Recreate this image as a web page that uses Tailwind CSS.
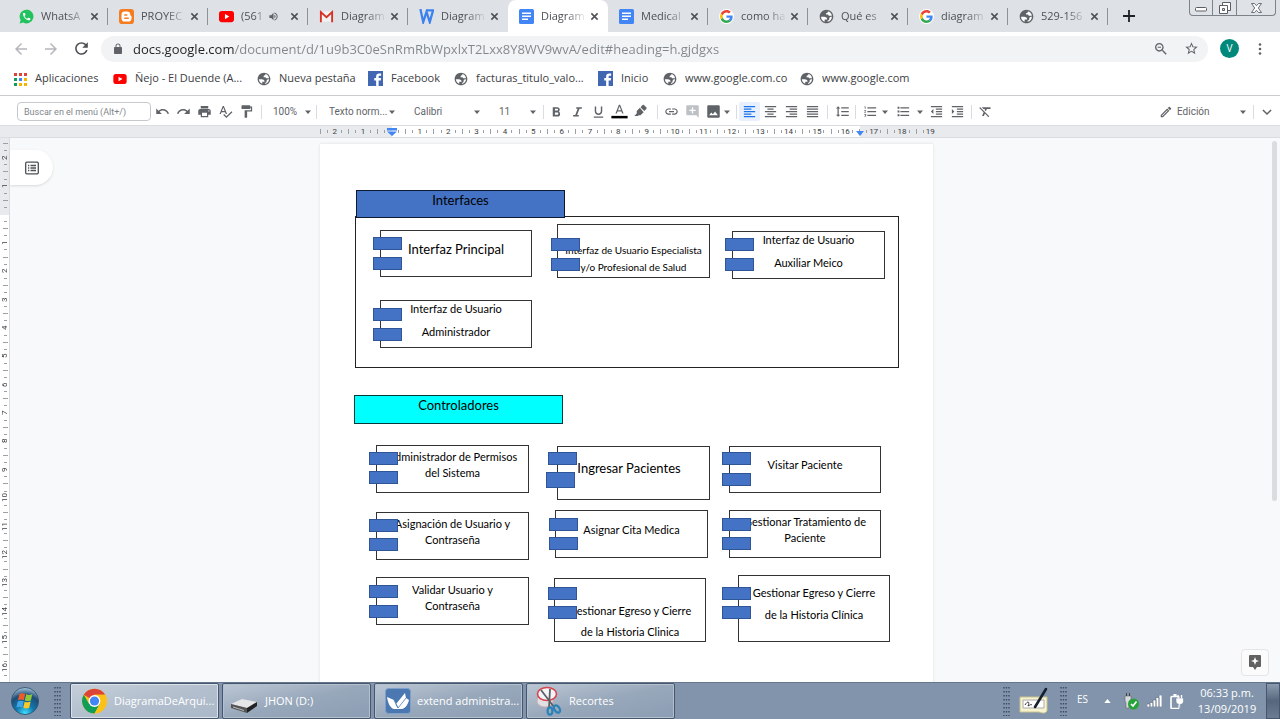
<!DOCTYPE html>
<html lang="es">
<head>
<meta charset="utf-8">
<title>DiagramaDeArquitectura - Documentos de Google</title>
<script src="https://cdn.jsdelivr.net/npm/@tailwindcss/browser@4"></script>
</head>
<body class="h-screen overflow-hidden flex flex-col bg-white font-['Open_Sans','Noto_Sans',sans-serif] text-[11px] text-[#3c4043]">

<svg class="hidden" aria-hidden="true">
  <symbol id="close" viewBox="0 0 10 10"><path d="M1.5 1.5l7 7M8.5 1.5l-7 7" stroke="#4d5156" stroke-width="1.7"/></symbol>
  <symbol id="caret" viewBox="0 0 8 8"><path d="M1 2.500h6L4 6z" fill="#5f6368"/></symbol>
  <symbol id="globe" viewBox="1 1 22 22"><circle cx="12" cy="12" r="9" fill="#fff"/><path fill="#5f6368" d="M12 2C6.480 2 2 6.480 2 12s4.480 10 10 10 10-4.480 10-10S17.520 2 12 2zM4 12.400h4.400c3 0 4.500 1.400 4.600 4.100h-3.700v3.100A8 8 0 0 1 4 12.400zm9.500 7.450V18c1.600 0 2.500-.900 2.500-2.500 0-2.200 1.500-3 3.900-3A8 8 0 0 1 13.500 19.850zM19.900 11h-4c-1 0-1.300-.8-1.300-1.800h-3.400c0-2.200 1-3.200 2.800-3.200V4.200a8 8 0 0 1 5.900 6.800z"/></symbol>
  <symbol id="youtube" viewBox="0 0 16 12"><rect x="0" y="0" width="16" height="12" rx="3" fill="#f00"/><path d="M6.300 3.200v5.600L11 6z" fill="#fff"/></symbol>
  <symbol id="facebook" viewBox="0 0 24 24"><path fill="#4267b2" d="M0 0h24v24H0z"/><path fill="#fff" d="M13 24v-9h-3v-4h3V8.500C13 5.500 15 4 17.800 4H21v3.600h-2c-1.600 0-2 .7-2 1.800V11h4l-.6 4H17v9z"/></symbol>
  <symbol id="google" viewBox="-4 -4 56 56"><circle cx="24" cy="24" r="28" fill="#fff"/><path fill="#EA4335" d="M24 9.500c3.540 0 6.710 1.220 9.210 3.600l6.850-6.850C35.900 2.380 30.470 0 24 0 14.620 0 6.510 5.380 2.560 13.220l7.980 6.190C12.430 13.720 17.740 9.500 24 9.500z"/><path fill="#4285F4" d="M46.980 24.550c0-1.570-.15-3.090-.38-4.550H24v9.020h12.940c-.58 2.960-2.260 5.480-4.780 7.180l7.730 6c4.510-4.180 7.090-10.360 7.090-17.650z"/><path fill="#FBBC05" d="M10.530 28.590c-.48-1.450-.76-2.990-.76-4.590s.27-3.140.76-4.590l-7.980-6.190C.92 16.460 0 20.120 0 24c0 3.880.92 7.540 2.560 10.780l7.970-6.190z"/><path fill="#34A853" d="M24 48c6.480 0 11.930-2.130 15.890-5.810l-7.730-6c-2.150 1.450-4.920 2.300-8.160 2.300-6.260 0-11.570-4.220-13.470-9.910l-7.980 6.190C6.510 42.620 14.620 48 24 48z"/></symbol>
  <symbol id="docs" viewBox="0 0 15 15"><rect width="15" height="15" rx="1.500" fill="#4285f4"/><path d="M3 4.300h9M3 7.300h9M3 10.300h6" stroke="#fff" stroke-width="1.400"/></symbol>
  <symbol id="whatsapp" viewBox="0 0 24 24"><path fill="#22c35e" d="M12 1a11 11 0 0 0-9.400 16.600L1 23l5.600-1.500A11 11 0 1 0 12 1z"/><path fill="#fff" transform="translate(4.500 4.500) scale(.64)" d="M6.620 10.790c1.440 2.830 3.760 5.140 6.590 6.590l2.200-2.200c.27-.27.67-.36 1.020-.24 1.120.37 2.330.57 3.570.57.55 0 1 .45 1 1V20c0 .55-.45 1-1 1-9.390 0-17-7.610-17-17 0-.55.45-1 1-1h3.500c.55 0 1 .45 1 1 0 1.250.2 2.450.57 3.570.11.35.03.74-.25 1.020l-2.200 2.200z"/></symbol>
  <symbol id="blogger" viewBox="0 0 24 24"><rect width="24" height="24" rx="5" fill="#f57d20"/><path fill="#fff" fill-rule="evenodd" d="M9 4h4c3 0 5 2 5 4.500v1c0 .8.500 1.200 1.200 1.200.5 0 .8.400.8.800V15c0 3-2 5-5 5H9c-3 0-5-2-5-5V9c0-3 2-5 5-5zm.2 4.200a1.200 1.200 0 0 0 0 2.400h3.300a1.200 1.200 0 0 0 0-2.400zm0 5.200a1.200 1.200 0 0 0 0 2.400h5.600a1.200 1.200 0 0 0 0-2.400z"/></symbol>
  <symbol id="gmail" viewBox="0 0 24 24"><path fill="#f2f2f2" d="M3 4h18v16H3z"/><path fill="none" stroke="#d93025" stroke-width="3" d="M3 21V5l9 8 9-8v16"/></symbol>
  <symbol id="word" viewBox="0 0 16 16"><path d="M1.500 0l3 14L8 3l3.500 11L15 1.500H8" fill="none" stroke="#3b82f0" stroke-width="2.400"/></symbol>
</svg>

<!-- Tab strip -->
<header class="h-8 shrink-0 flex bg-[#dee1e6] pl-2">
  <nav class="flex" aria-label="Pestañas" id="tabs"></nav>
  <button class="w-[42px] flex items-center justify-center" aria-label="Nueva pestaña"><svg class="size-3" viewBox="0 0 12 12"><path d="M6 0v12M0 6h12" stroke="#202124" stroke-width="1.800"/></svg></button>
  <div class="ml-auto mr-1 self-start h-4 flex border border-t-0 border-[#7d8288] rounded-b bg-[#dfe2e7] divide-x divide-[#7d8288]">
    <button class="w-[23px] flex items-center justify-center" aria-label="Minimizar"><svg class="w-3 h-3" viewBox="0 0 12 12"><rect x=".5" y="5.500" width="11" height="3.500" rx="1" fill="#fff" stroke="#5a5f66"/></svg></button>
    <button class="w-6 flex items-center justify-center" aria-label="Restaurar"><svg class="size-3" viewBox="0 0 12 12"><path d="M3.500.5h8v8h-8z" fill="#fff" stroke="#5a5f66"/><path d="M.5 3.500h8v8h-8z" fill="#fff" stroke="#5a5f66"/><path d="M3.500 6.500h2v2h-2z" fill="#dfe2e7" stroke="#5a5f66"/></svg></button>
    <button class="w-[38px] flex items-center justify-center" aria-label="Cerrar"><svg class="w-[11px] h-[10px]" viewBox="0 0 12 11"><path d="M.5.500h3.200L6 3 8.300.5h3.200L8 5.500l3.500 5H8.300L6 8l-2.300 2.500H.5l3.500-5z" fill="#fff" stroke="#5a5f66"/></svg></button>
  </div>
</header>

<!-- Address bar -->
<div class="h-8 shrink-0 flex items-center pt-px pl-[6px] pr-3 text-[#5f6368]">
  <button class="w-[30px] flex justify-center text-[#b4b7bb]" aria-label="Atrás"><svg class="size-[18px]" viewBox="0 0 24 24" fill="currentColor"><path d="M20 11H7.830l5.590-5.590L12 4l-8 8 8 8 1.410-1.410L7.830 13H20v-2z"/></svg></button>
  <button class="w-[30px] flex justify-center text-[#b4b7bb]" aria-label="Adelante"><svg class="size-[18px]" viewBox="0 0 24 24" fill="currentColor"><path d="M12 4l-1.410 1.410L16.170 11H4v2h12.170l-5.580 5.590L12 20l8-8z"/></svg></button>
  <button class="w-[30px] flex justify-center text-[#4d5156]" aria-label="Recargar"><svg class="size-[19px]" viewBox="0 0 24 24" fill="currentColor"><path d="M17.650 6.350C16.200 4.900 14.210 4 12 4c-4.420 0-7.990 3.580-7.990 8s3.570 8 7.990 8c3.730 0 6.840-2.550 7.730-6h-2.080c-.82 2.330-3.040 4-5.650 4-3.310 0-6-2.690-6-6s2.690-6 6-6c1.660 0 3.140.69 4.220 1.780L13 11h7V4l-2.350 2.350z"/></svg></button>
  <label class="ml-[5px] h-[26px] flex-1 flex items-center rounded-full bg-[#f1f3f4] pl-[11px] pr-[9px]">
    <svg class="size-3" viewBox="0 0 24 24" fill="#5f6368"><path d="M18 8h-1V6c0-2.760-2.240-5-5-5S7 3.240 7 6v2H6c-1.100 0-2 .9-2 2v10c0 1.100.9 2 2 2h12c1.100 0 2-.9 2-2V10c0-1.100-.9-2-2-2zm-2.900 0H8.900V6c0-1.710 1.390-3.100 3.100-3.100s3.100 1.390 3.100 3.100v2z"/></svg>
    <input type="text" aria-label="Dirección" class="ml-[9px] flex-1 h-5 text-[13px] outline-none text-transparent bg-clip-text bg-[linear-gradient(90deg,#202124_101px,#80868b_101px)]" value="docs.google.com/document/d/1u9b3C0eSnRmRbWpxlxT2Lxx8Y8WV9wvA/edit#heading=h.gjdgxs">
    <button class="w-[30px] flex justify-center" aria-label="Zoom"><svg class="size-4" viewBox="0 0 24 24" fill="#5f6368"><path d="M15.500 14h-.79l-.28-.27C15.410 12.590 16 11.110 16 9.500 16 5.910 13.090 3 9.500 3S3 5.910 3 9.500 5.910 16 9.500 16c1.610 0 3.090-.59 4.230-1.570l.27.28v.79l5 4.990L20.490 19l-4.990-5zm-6 0C7.010 14 5 11.990 5 9.500S7.010 5 9.500 5 14 7.010 14 9.500 11.990 14 9.500 14zM7 8.700h5v1.600H7z"/></svg></button>
    <button class="w-[30px] -mr-[7px] flex justify-center" aria-label="Añadir a marcadores"><svg class="size-[15px]" viewBox="0 0 24 24" fill="#5f6368"><path d="M22 9.240l-7.190-.62L12 2 9.190 8.630 2 9.240l5.460 4.730L5.820 21 12 17.270 18.180 21l-1.630-7.030L22 9.240zM12 15.400l-3.760 2.270 1-4.280-3.320-2.880 4.380-.38L12 6.100l1.710 4.040 4.380.38-3.320 2.880 1 4.280L12 15.400z"/></svg></button>
  </label>
  <button class="ml-3 size-[19px] rounded-full bg-[#00897b] text-white text-[10px] leading-[19px]" aria-label="Perfil V">V</button>
  <button class="ml-[13px] w-4 flex justify-center" aria-label="Menú"><svg class="w-1 h-3" viewBox="0 0 4 12" fill="#5f6368"><circle cx="2" cy="1.500" r="1.300"/><circle cx="2" cy="6" r="1.300"/><circle cx="2" cy="10.500" r="1.300"/></svg></button>
</div>

<!-- Bookmarks -->
<nav class="h-8 shrink-0 flex items-center pl-[13px] pb-[2px] border-b border-[#c9cbce]" aria-label="Marcadores">
  <a href="#" class="w-[100px] flex items-center gap-2"><svg class="w-[14px] h-[14px]" viewBox="0 0 14 14"><path fill="#db4437" d="M1 1h3v3H1zM6 1h3v3H6zM11 1h3v3h-3z"/><path fill="#0f9d58" d="M1 6h3v3H1zM1 11h3v3H1z"/><path fill="#4285f4" d="M6 6h3v3H6z"/><path fill="#f4b400" d="M11 6h3v3h-3zM6 11h3v3H6zM11 11h3v3h-3z"/></svg>Aplicaciones</a>
  <a href="#" class="w-36 flex items-center gap-2"><svg class="w-[14px] h-[10px]"><use href="#youtube"/></svg>Ñejo - El Duende (A...</a>
  <a href="#" class="w-[111px] flex items-center gap-2"><svg class="size-[14px]"><use href="#globe"/></svg>Nueva pestaña</a>
  <a href="#" class="w-[86px] flex items-center gap-2"><svg class="size-[15px]"><use href="#facebook"/></svg>Facebook</a>
  <a href="#" class="w-36 flex items-center gap-2"><svg class="size-[14px]"><use href="#globe"/></svg>facturas_titulo_valo...</a>
  <a href="#" class="w-[65px] flex items-center gap-2"><svg class="size-[15px]"><use href="#facebook"/></svg>Inicio</a>
  <a href="#" class="w-[137px] flex items-center gap-2"><svg class="size-[14px]"><use href="#globe"/></svg>www.google.com.co</a>
  <a href="#" class="flex items-center gap-2"><svg class="size-[14px]"><use href="#globe"/></svg>www.google.com</a>
</nav>

<!-- Document toolbar -->
<div class="h-[30px] shrink-0 flex items-center pt-[2px] pl-[17px] pr-[6px] border-b border-[#dadce0] font-[Roboto,'Liberation_Sans',sans-serif] text-[10px] text-[#5f6368]" role="toolbar" aria-label="Formato">
  <input type="text" placeholder="Buscar en el menú (Alt+/)" aria-label="Buscar en el menú" class="w-[134px] h-[19px] border border-[#c6c9cd] rounded-sm px-[6px] outline-none text-[9px] placeholder:text-[#80868b]">
  <div class="ml-px flex" id="tools-edit"></div>
  <span class="ml-1 w-px h-[14px] bg-[#dadce0]"></span>
  <label class="ml-[11px] w-[39px] flex items-center justify-between"><select aria-label="Zoom" class="appearance-none w-7 outline-none"><option>100%</option></select><svg class="size-2"><use href="#caret"/></svg></label>
  <span class="ml-1 w-px h-[14px] bg-[#dadce0]"></span>
  <label class="ml-3 w-[67px] flex items-center justify-between"><select aria-label="Estilos" class="appearance-none w-[59px] outline-none"><option>Texto norm...</option></select><svg class="size-2 shrink-0"><use href="#caret"/></svg></label>
  <label class="ml-[18px] w-[67px] flex items-center justify-between"><select aria-label="Fuente" class="appearance-none w-12 outline-none"><option>Calibri</option></select><svg class="size-2"><use href="#caret"/></svg></label>
  <label class="ml-[18px] w-[38px] flex items-center justify-between"><select aria-label="Tamaño de fuente" class="appearance-none w-5 outline-none"><option>11</option></select><svg class="size-2"><use href="#caret"/></svg></label>
  <span class="ml-[6px] mr-[2px] w-px h-[14px] bg-[#dadce0]"></span>
  <div class="flex" id="tools-text"></div>
  <span class="ml-[6px] mr-[3px] w-px h-[14px] bg-[#dadce0]"></span>
  <div class="flex" id="tools-insert"></div>
  <svg class="-ml-px size-2"><use href="#caret"/></svg>
  <span class="ml-[5px] mr-[2px] w-px h-[14px] bg-[#dadce0]"></span>
  <div class="flex" id="tools-align"></div>
  <span class="mx-1 w-px h-[14px] bg-[#dadce0]"></span>
  <div class="flex" id="tools-spacing"></div>
  <span class="ml-[2px] mr-1 w-px h-[14px] bg-[#dadce0]"></span>
  <div class="flex" id="tools-numbered"></div>
  <svg class="mr-1 size-2"><use href="#caret"/></svg>
  <div class="flex" id="tools-bulleted"></div>
  <svg class="mx-[2px] size-2"><use href="#caret"/></svg>
  <div class="flex" id="tools-indent"></div>
  <span class="mx-[3px] w-px h-[14px] bg-[#dadce0]"></span>
  <div class="flex" id="tools-clear"></div>
  <label class="ml-auto w-[88px] flex items-center"><svg class="size-[14px]" viewBox="0 0 24 24" fill="#5f6368"><path d="M14.060 9.020l.92.92L5.920 19H5v-.92l9.060-9.060M17.660 3c-.25 0-.51.1-.7.29l-1.830 1.830 3.750 3.750 1.830-1.830c.39-.39.39-1.020 0-1.410l-2.340-2.340c-.2-.2-.45-.29-.71-.29zm-3.600 3.190L3 17.250V21h3.750L17.810 9.940l-3.750-3.750z"/></svg><select aria-label="Modo" class="ml-1 flex-1 appearance-none outline-none"><option>Edición</option></select><svg class="size-2"><use href="#caret"/></svg></label>
  <span class="mx-[6px] w-px h-[14px] bg-[#dadce0]"></span>
  <button class="w-[14px]" aria-label="Ocultar menús"><svg class="size-[14px]" viewBox="0 0 24 24"><path d="M5 8.500l7 7 7-7" fill="none" stroke="#5f6368" stroke-width="2.600"/></svg></button>
</div>

<!-- Horizontal ruler -->
<div class="h-[12px] shrink-0 flex justify-center pl-[10px] pr-[37px] bg-[#e8eaed] border-b border-[#dadce0] font-[Roboto,'Liberation_Sans',sans-serif] text-[8px] text-[#3c4043]">
  <div class="relative w-[613px]">
    <div class="absolute inset-y-0 left-[72px] w-[468px] bg-white"></div>
    <div class="absolute inset-y-0 -left-[3px] w-[624px] grid grid-cols-22" id="hruler"></div>
    <svg class="absolute left-[67px] top-[2px] w-[10px] h-2" viewBox="0 0 10 8" fill="#4285f4"><path d="M0 0h10v2.500H0zM0 3.500h10L5 8z"/></svg>
    <svg class="absolute left-[536px] top-[5px] w-2 h-[5px]" viewBox="0 0 8 5" fill="#4285f4"><path d="M0 0h8L4 5z"/></svg>
  </div>
</div>

<!-- Workspace -->
<main class="relative flex-1 min-h-0 flex bg-[#f8f9fa] overflow-hidden">
  <div class="relative w-[10px] shrink-0 pt-[2px] bg-white border-r border-[#dadce0] font-[Roboto,'Liberation_Sans',sans-serif] text-[8px] text-[#3c4043]">
    <div class="absolute inset-x-0 top-0 h-[77px] bg-[#e8eaed]"></div>
    <div class="relative h-[539px] grid grid-rows-19" id="vruler"></div>
  </div>
  <div class="flex-1 flex justify-center pt-[5px] pr-[37px]">
    <article class="relative w-[613px] bg-white border-t border-[#eceef0] shadow font-[Lato,'Liberation_Sans',sans-serif] text-black" id="page"></article>
  </div>
  <button class="absolute left-[10px] top-3 w-[43px] h-[35px] pl-[15px] rounded-r-full bg-white shadow" aria-label="Mostrar esquema"><svg class="size-[14px]" viewBox="0 0 14 14"><rect x=".7" y="1.200" width="12.600" height="11.600" rx="1" fill="none" stroke="#4d5156" stroke-width="1.300"/><path d="M3 4.500h1.300M3 7h1.300M3 9.500h1.300M5.500 4.500H11M5.500 7H11M5.500 9.500H11" stroke="#4d5156" stroke-width="1.300"/></svg></button>
  <div class="absolute right-[3px] top-[3px] w-[5px] h-[360px] rounded-full bg-[#dadce0]"></div>
  <button class="absolute right-[11px] bottom-[6px] w-[28px] h-[27px] flex items-center justify-center rounded-sm border border-[#e3e5e8] bg-[#fbfbfc]" aria-label="Explorar"><svg class="w-3 h-[15px]" viewBox="0 0 12 15"><path fill="#616161" d="M1 0h10a1 1 0 0 1 1 1v10a1 1 0 0 1-1 1H8l-2 3-2-3H1a1 1 0 0 1-1-1V1a1 1 0 0 1 1-1z"/><path fill="#fff" d="M6 2l1.100 2.900L10 6 7.100 7.100 6 10 4.900 7.100 2 6l2.900-1.100z"/></svg></button>
</main>

<!-- Taskbar -->
<footer class="h-[37px] shrink-0 flex items-center bg-[#8294ab] border-t border-[#66768c] text-white">
  <button class="ml-[11px] size-[28px] shrink-0" aria-label="Inicio"><svg class="size-[28px]" viewBox="0 0 32 32">
    <defs><radialGradient id="orb" cx=".5" cy=".95" r=".95"><stop offset="0" stop-color="#3fe0ff"/><stop offset=".35" stop-color="#1277ad"/><stop offset=".7" stop-color="#1f4c75"/><stop offset="1" stop-color="#a9c8de"/></radialGradient></defs>
    <circle cx="16" cy="16" r="15.500" fill="url(#orb)" stroke="#34536f"/>
    <path fill="#f0592a" d="M9.500 8c2.200-1.200 4.500-1.200 6.700-.2l-1.500 7.200c-2.200-1-4.500-.9-6.700.2z"/><path fill="#8fc93a" d="M17.300 8.300c2.200 1 4.500 1 7-.1l-1.600 7.100c-2.300 1-4.500 1-6.900.1z"/><path fill="#42a5e8" d="M7.700 16.500c2.200-1.100 4.500-1.200 6.700-.2L12.900 23.300c-2.200-1-4.500-.9-6.700.2z"/><path fill="#fbc926" d="M15.500 16.800c2.300.9 4.500.9 6.900-.1l-1.600 7c-2.200 1-4.400 1-6.700.1z"/></svg></button>
  <svg class="ml-[15px] w-[7px] h-[30px] shrink-0"><use href="#grip"/></svg>
  <nav class="ml-[9px] flex gap-1" aria-label="Ventanas abiertas">
    <button class="w-[149px] -mr-px h-9 flex items-center pl-[10px] gap-[6px] rounded-xs border border-[#46566c] bg-linear-to-br from-[#c5cfda] via-[#b3bfcd] to-[#aab8c9] inset-shadow-[0_0_0_1px_#dbe2ea]">
      <svg class="w-[27px] h-[28px]" viewBox="0 0 48 48"><circle cx="24" cy="24" r="22" fill="#fbc116"/><path fill="#db4437" d="M24 24L4.900 13A22 22 0 0 1 43 13H24z"/><path fill="#0f9d58" d="M4.900 13A22 22 0 0 0 24 46l9.500-16.500L24 24l-9.500 5.500z"/><path fill="#fbc116" d="M33.500 29.500L24 46A22 22 0 0 0 43.100 13H24z"/><circle cx="24" cy="24" r="10.500" fill="#fff"/><circle cx="24" cy="24" r="8.200" fill="#4285f4"/></svg>
      <span>DiagramaDeArqui...</span></button>
    <button class="w-[149px] -mr-px h-9 flex items-center pl-[7px] gap-[6px] rounded-xs border border-[#46566c] bg-linear-to-br from-[#bcc7d4] via-[#98a8bb] to-[#8b9db3] inset-shadow-[0_0_0_1px_#b4c0ce]">
      <svg class="w-[29px] h-[28px]" viewBox="0 0 29 28"><path fill="#e6e6e6" d="M1 17l11-5 15 3-10 6z"/><path fill="#555" d="M1 17l16 4v5L1 21z"/><path fill="#222" d="M17 21l10-6v4l-10 7z"/><path stroke="#bbb" d="M3 20l11 3.500"/></svg>
      <span>JHON (D:)</span></button>
    <button class="w-[149px] -mr-px h-9 flex items-center pl-[10px] gap-[6px] rounded-xs border border-[#46566c] bg-linear-to-br from-[#bcc7d4] via-[#98a8bb] to-[#8b9db3] inset-shadow-[0_0_0_1px_#b4c0ce]">
      <svg class="w-[26px] h-[28px]" viewBox="0 0 26 28"><rect x=".5" y="1.500" width="25" height="25" rx="3" fill="#4b78b0" stroke="#7fa0c8"/><path fill="#fff" d="M2 10l7 3 2 4 9-11 1 5 3 2c-1 4-3 8-7 9H9c-4-1-6-6-7-12z"/><path stroke="#4b78b0" stroke-width=".8" d="M11 17l2 4 8-10M9 13l4 8" fill="none"/></svg>
      <span>extend administra...</span></button>
    <button class="w-[149px] h-9 flex items-center pl-2 gap-[6px] rounded-xs border border-[#46566c] bg-linear-to-br from-[#bcc7d4] via-[#98a8bb] to-[#8b9db3] inset-shadow-[0_0_0_1px_#b4c0ce]">
      <svg class="w-[28px] h-[30px]" viewBox="0 0 28 30"><ellipse cx="10" cy="15" rx="8" ry="6" fill="#dfe0e4" stroke="#d9aeb2"/><ellipse cx="12" cy="8" rx="9.500" ry="6.500" fill="#f4f4f6" stroke="#d8434c" stroke-width="1.600"/><path d="M6 4l13 17M15 3l-1 19" stroke="#5c6068" stroke-width="1.800"/><ellipse cx="22" cy="23" rx="2.600" ry="4" transform="rotate(-35 22 23)" fill="none" stroke="#2a82b8" stroke-width="2.200"/><ellipse cx="15" cy="25" rx="2.400" ry="3.600" fill="none" stroke="#2a82b8" stroke-width="2.200"/></svg>
      <span>Recortes</span></button>
  </nav>
  <div class="ml-auto flex items-center h-full">
    <svg class="w-[7px] h-[30px]"><use href="#grip"/></svg>
    <svg class="ml-[9px] w-[30px] h-[28px]" viewBox="0 0 30 28"><path fill="#f7f3cf" stroke="#c9c48f" d="M1 10h27v14c-2 3-5 2-8 1H1z"/><path fill="#fff" stroke="#aaa" d="M4 13h21v8H4z"/><path d="M6 18c3-5 5-3 3 1 2-1 3-2 4-1" stroke="#333" fill="none"/><path d="M27 2L16 20" stroke="#16202e" stroke-width="2.600" stroke-linecap="round"/></svg>
    <svg class="ml-[11px] w-[7px] h-[30px]"><use href="#grip"/></svg>
    <span class="ml-[10px] pb-1 text-[10px]">ES</span>
    <svg class="ml-4 w-[7px] h-1" viewBox="0 0 8 5"><path d="M0 5h8L4 0z" fill="#fff"/></svg>
    <svg class="ml-3 w-4 h-5" viewBox="0 0 16 20"><path fill="#d7dade" stroke="#666" stroke-width=".6" d="M2 5h6v5l-2 2v5H3v-5L2 10z"/><path d="M3.500 5V2M6.500 5V2" stroke="#444"/><circle cx="10.500" cy="13" r="5.500" fill="#27a33a"/><path d="M8 13l2 2 3.500-4.500" stroke="#fff" stroke-width="1.600" fill="none"/></svg>
    <svg class="ml-2 w-[15px] h-3" viewBox="0 0 15 12" fill="#fff" stroke="#5b6b80" stroke-width=".6"><path d="M0 9h3v3H0zM3 7.500h3V12H3zM6 5h3v7H6zM9 2.500h3V12H9zM12 0h3v12h-3z"/></svg>
    <svg class="ml-2 w-[14px] h-[15px]" viewBox="0 0 14 15"><rect x="1" y="2.500" width="8" height="12" rx="1" fill="none" stroke="#fff" stroke-width="1.600"/><path d="M3.500 1h3" stroke="#fff" stroke-width="2"/><path fill="#fff" stroke="#6b7b90" stroke-width=".5" d="M6 4h7.500v3c0 2-1 3-3 3.300V14H9v-3.700C7 10 6 9 6 7z"/><path d="M8 1v3M11.500 1v3" stroke="#fff" stroke-width="1.300"/></svg>
    <div class="w-[62px] ml-3 text-center leading-4 whitespace-nowrap"><div>06:33 p.m.</div><div>13/09/2019</div></div>
    <div class="ml-2 w-[14px] h-full border border-[#46566c] bg-linear-to-b from-[#8c9bae] via-[#56677d] to-[#6c7c92]"></div>
  </div>
</footer>

<svg class="hidden" aria-hidden="true"><symbol id="grip" viewBox="0 0 7 30"><path d="M1 1v29M3.500 1v29M6 1v29" stroke="#3d4b5e" stroke-width="1.400" stroke-dasharray="1.500 2.500"/></symbol></svg>

<script>
const put = (id, html) => { document.getElementById(id).innerHTML = html; };

/* Browser tabs: icon, title, state */
const tabs = [
  ['whatsapp', 'WhatsA'], ['blogger', 'PROYEC'], ['youtube', '(561', 'sound'], ['gmail', 'Diagram'],
  ['word', 'Diagram'], ['docs', 'Diagram', 'active'], ['docs', 'Medical'], ['google', 'como ha'],
  ['globe', 'Qué es'], ['google', 'diagram'], ['globe', '529-156']
];
put('tabs', tabs.map(([icon, title, state], i) => `
  <div class="relative w-[100px] h-full flex items-center pl-[11px] pr-[9px] ${state === 'active' ? 'bg-white rounded-t-lg' : ''}">
    <svg class="size-[15px] shrink-0"><use href="#${icon}"/></svg>
    <a href="#" class="${state === 'sound' ? 'w-[25px]' : 'w-[46px]'} shrink-0 ml-[7px] whitespace-nowrap text-[#4d5156] [mask-image:linear-gradient(90deg,#000_55%,transparent)]">${title}</a>
    ${state === 'sound' ? '<svg class="ml-[2px] size-[11px] shrink-0" viewBox="0 0 24 24" fill="#5f6368"><path d="M3 9v6h4l5 5V4L7 9H3zm13.500 3c0-1.770-1.020-3.290-2.500-4.030v8.050c1.480-.73 2.500-2.250 2.500-4.020zM14 3.230v2.060c2.890.86 5 3.540 5 6.710s-2.110 5.850-5 6.710v2.060c4.010-.91 7-4.490 7-8.770s-2.990-7.860-7-8.770z"/></svg>' : ''}
    <button class="ml-auto" aria-label="Cerrar pestaña"><svg class="size-[9px]"><use href="#close"/></svg></button>
    ${state !== 'active' && i !== 4 ? '<span class="absolute right-0 top-2 w-px h-[17px] bg-[#8d9196]"></span>' : ''}
  </div>`).join(''));

/* Toolbar buttons */
const tool = (name, path, cls = '') => `<button class="w-[21px] h-[19px] flex items-center justify-center ${cls}" aria-label="${name}"><svg class="size-[15px]" viewBox="0 0 24 24" fill="currentColor">${path.startsWith('<') ? path : `<path d="${path}"/>`}</svg></button>`;
put('tools-edit',
  tool('Deshacer', 'M12.500 8c-2.650 0-5.050.99-6.900 2.600L2 7v9h9l-3.620-3.620c1.390-1.160 3.160-1.880 5.120-1.880 3.540 0 6.550 2.310 7.600 5.500l2.370-.78C21.080 11.030 17.150 8 12.500 8z') +
  tool('Rehacer', 'M18.400 10.600C16.550 8.990 14.150 8 11.500 8c-4.650 0-8.580 3.030-9.960 7.220L3.900 16c1.050-3.190 4.050-5.500 7.600-5.500 1.950 0 3.730.72 5.120 1.880L13 16h9V7l-3.600 3.600z') +
  tool('Imprimir', 'M19 8H5c-1.660 0-3 1.340-3 3v6h4v4h12v-4h4v-6c0-1.660-1.340-3-3-3zm-3 11H8v-5h8v5zm3-7c-.55 0-1-.45-1-1s.45-1 1-1 1 .45 1 1-.45 1-1 1zm-1-9H6v4h12V3z') +
  tool('Ortografía', 'M12.450 16h2.090L9.430 3H7.570L2.460 16h2.090l1.120-3h5.640l1.140 3zm-6.020-5L8.500 5.480 10.570 11H6.430zm15.160.59l-8.090 8.090L9.830 16l-1.410 1.410 5.090 5.090L23 13l-1.410-1.410z') +
  tool('Copiar formato', 'M18 4V3c0-.55-.45-1-1-1H5c-.55 0-1 .45-1 1v4c0 .55.45 1 1 1h12c.55 0 1-.45 1-1V6h1v4H9v11c0 .55.45 1 1 1h2c.55 0 1-.45 1-1v-9h8V4h-3z'));
put('tools-text',
  tool('Negrita', 'M15.600 11.790c.97-.67 1.650-1.770 1.650-2.790 0-2.260-1.750-4-4-4H6v15h8.040c2.090 0 3.710-1.700 3.710-3.790 0-1.520-.86-3.820-2.150-4.420zM9.500 7.500H13c.83 0 1.500.67 1.500 1.500s-.67 1.500-1.500 1.500H9.500v-3zm4 9.500h-4v-3.500h4c.83 0 1.500.67 1.500 1.500s-.67 2-1.500 2z') +
  tool('Cursiva', 'M10 5v2.500h2.210l-3.820 10H5V20h9v-2.500h-2.610l3.820-10H19V5z') +
  tool('Subrayado', 'M12 17.500c3.310 0 6-2.690 6-6V4h-2.300v7.500c0 1.930-1.770 3.700-3.700 3.700s-3.700-1.770-3.700-3.700V4H6v7.500c0 3.310 2.690 6 6 6zM4.500 20v2h15v-2h-15z') +
  tool('Color del texto', '<path d="M11 1L5.500 15h2.250l1.120-3h6.250l1.120 3h2.250L13 1h-2zm-1.380 9L12 3.670 14.380 10H9.620z"/><path fill="#000" d="M-1 19h26v4H-1z"/>', '[&>svg]:overflow-visible') +
  tool('Color de resaltado', 'M21.500 5.500l-4-4c-.6-.6-1.500-.6-2.100 0L12 5l6 6 3.500-3.400c.6-.6.6-1.500 0-2.100zM11 6L6 11v4l-4 4h6l1-1h3l5-5z'));
put('tools-insert',
  tool('Insertar enlace', 'M3.900 12c0-1.710 1.390-3.100 3.100-3.100h4V7H7c-2.760 0-5 2.240-5 5s2.240 5 5 5h4v-1.900H7c-1.710 0-3.100-1.390-3.100-3.100zM8 13h8v-2H8v2zm9-6h-4v1.900h4c1.710 0 3.100 1.390 3.100 3.100s-1.390 3.100-3.100 3.100h-4V17h4c2.760 0 5-2.240 5-5s-2.240-5-5-5z') +
  tool('Añadir comentario', 'M21.990 4c0-1.100-.89-2-1.990-2H4c-1.100 0-2 .9-2 2v12c0 1.100.9 2 2 2h14l4 4-.01-18zM17 11h-4v4h-2v-4H7V9h4V5h2v4h4v2z', 'text-[#bdc1c6]') +
  tool('Insertar imagen', 'M22 20V4c0-1.100-.9-2-2-2H4c-1.100 0-2 .9-2 2v16c0 1.100.9 2 2 2h16c1.100 0 2-.9 2-2zM8.500 13.500l2.500 3.010L14.500 12l4.500 6H5l3.500-4.500z'));
put('tools-align',
  tool('Alinear a la izquierda', 'M15 15H3v2h12v-2zm0-8H3v2h12V7zM3 13h18v-2H3v2zm0 8h18v-2H3v2zM3 3v2h18V3H3z', 'bg-[#e8f0fe] text-[#1a73e8] rounded-xs') +
  tool('Centrar', 'M7 15v2h10v-2H7zm-4 6h18v-2H3v2zm0-8h18v-2H3v2zm4-6v2h10V7H7zM3 3v2h18V3H3z') +
  tool('Alinear a la derecha', 'M3 21h18v-2H3v2zm6-4h12v-2H9v2zm-6-4h18v-2H3v2zm6-4h12V7H9v2zM3 3v2h18V3H3z') +
  tool('Justificar', 'M3 21h18v-2H3v2zm0-4h18v-2H3v2zm0-4h18v-2H3v2zm0-4h18V7H3v2zm0-6v2h18V3H3z'));
put('tools-spacing', tool('Interlineado', 'M6 7h2.500L5 3.500 1.500 7H4v10H1.500L5 20.500 8.500 17H6V7zm4-2v2h12V5H10zm0 14h12v-2H10v2zm0-6h12v-2H10v2z'));
put('tools-numbered', tool('Lista numerada', 'M2 17h2v.5H3v1h1v.5H2v1h3v-4H2v1zm1-9h1V4H2v1h1v3zm-1 3h1.800L2 13.100v.9h3v-1H3.200L5 10.900V10H2v1zm5-6v2h14V5H7zm0 14h14v-2H7v2zm0-6h14v-2H7v2z'));
put('tools-bulleted', tool('Lista con viñetas', 'M2.500 4.500h3v3h-3zM2.500 10.500h3v3h-3zM2.500 16.500h3v3h-3zM7 19h14v-2H7v2zm0-6h14v-2H7v2zm0-8v2h14V5H7z'));
put('tools-indent',
  tool('Reducir sangría', 'M11 17h10v-2H11v2zm-8-5l4 4V8l-4 4zm0 9h18v-2H3v2zM3 3v2h18V3H3zm8 6h10V7H11v2zm0 4h10v-2H11v2z') +
  tool('Aumentar sangría', 'M3 21h18v-2H3v2zM3 8v8l4-4-4-4zm8 9h10v-2H11v2zM3 3v2h18V3H3zm8 6h10V7H11v2zm0 4h10v-2H11v2z'));
put('tools-clear', tool('Borrar formato', 'M3.270 5L2 6.270l6.970 6.970L6.500 19h3l1.570-3.660L16.730 21 18 19.730 3.550 5.270 3.270 5zM6 5v.18L8.820 8h2.400l-.72 1.680 2.100 2.100L14.210 8H20V5H6z'));

/* Rulers: one cell per centimetre */
const cm = (from, to) => Array.from({ length: to - from + 1 }, (_, i) => Math.abs(from + i) || '');
put('hruler', cm(-2, 19).map(n => `<div class="grid grid-cols-4 items-center justify-items-center"><i class="w-px h-[5px] bg-[#9aa0a6]"></i><i class="w-px h-[3px] bg-[#9aa0a6]"></i><span class="w-0 flex justify-center leading-[10px]">${n}</span>${n === 19 ? '' : '<i class="w-px h-[3px] bg-[#9aa0a6]"></i>'}</div>`).join(''));
put('vruler', cm(-2, 16).map(n => `<div class="grid grid-rows-4 items-center justify-items-center"><i class="h-px w-[5px] bg-[#9aa0a6]"></i><i class="h-px w-[3px] bg-[#9aa0a6]"></i><span class="h-0 flex items-center justify-center leading-[10px] [writing-mode:vertical-rl] rotate-180">${n}</span><i class="h-px w-[3px] bg-[#9aa0a6]"></i></div>`).join(''));

/* Component diagram. Node: x, y, width, height, lugs [x, y, height], first line top, line height, text size, lines, text width */
const size = { s: 'text-[10px]', m: 'text-[11px]', l: 'text-[13px]' };
const nodes = [
  [60, 86, 152, 47, [[53, 93], [53, 113]], 95, 20, 'l', ['Interfaz Principal']],
  [237, 80, 153, 54, [[231, 94], [231, 114]], 98, 17, 's', ['Interfaz de Usuario Especialista', 'y/o Profesional de Salud']],
  [412, 87, 153, 48, [[405, 94], [405, 114]], 84, 23, 'm', ['Interfaz de Usuario', 'Auxiliar Meico']],
  [60, 156, 152, 48, [[53, 164], [53, 184]], 153, 23, 'm', ['Interfaz de Usuario', 'Administrador']],
  [56, 301, 153, 48, [[49, 308], [49, 327]], 305, 16, 'm', ['Administrador de Permisos', 'del Sistema']],
  [237, 302, 153, 54, [[228, 308], [226, 328, 16]], 314, 20, 'l', ['Ingresar Pacientes'], 144],
  [409, 302, 152, 47, [[402, 308], [402, 329]], 313, 16, 'm', ['Visitar Paciente']],
  [56, 368, 153, 48, [[49, 375], [49, 394]], 372, 16, 'm', ['Asignación de Usuario y', 'Contraseña']],
  [235, 366, 153, 48, [[229, 374], [229, 393]], 378, 16, 'm', ['Asignar Cita Medica']],
  [409, 366, 152, 48, [[402, 374], [402, 393]], 370, 16, 'm', ['Gestionar Tratamiento de', 'Paciente']],
  [56, 433, 153, 48, [[49, 441], [49, 461]], 438, 16, 'm', ['Validar Usuario y', 'Contraseña']],
  [234, 434, 152, 64, [[228, 443], [228, 462]], 456, 21, 'm', ['Gestionar Egreso y Cierre', 'de la Historia Clinica']],
  [418, 431, 152, 67, [[402, 443], [402, 462]], 438, 22, 'm', ['Gestionar Egreso y Cierre', 'de la Historia Clínica']]
];
const box = (x, y, w, h) => `left:${x}px;top:${y}px;width:${w}px;height:${h}px`;
put('page', `
  <div class="absolute border border-[#222]" style="${box(35, 72, 544, 152)}"></div>
  <h2 class="absolute border border-[#0b1a2f] bg-[#4472c4] text-[13px] leading-[18px] text-center" style="${box(36, 46, 209, 28)}">Interfaces</h2>
  <h2 class="absolute border border-[#073a3a] bg-[#00ffff] text-[13px] leading-[19px] text-center" style="${box(34, 251, 209, 29)}">Controladores</h2>` +
  nodes.map(([x, y, w, h, lugs, top, lh, sz, lines, tw = w]) => `
  <div class="absolute border border-[#333]" style="${box(x, y, w, h)}"></div>
  <p class="absolute whitespace-pre text-center ${size[sz]}" style="left:${x}px;top:${top}px;width:${tw}px;line-height:${lh}px">${lines.join('\n')}</p>
  ${lugs.map(([lx, ly, lugHeight = 13]) => `<div class="absolute border border-[#2f5597] bg-[#4472c4]" style="${box(lx, ly, 29, lugHeight)}"></div>`).join('')}`).join(''));
</script>
</body>
</html>
